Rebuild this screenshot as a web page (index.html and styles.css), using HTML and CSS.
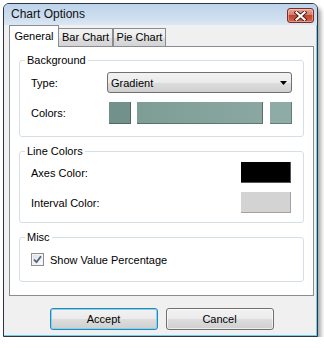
FILE: index.html
```html
<!DOCTYPE html>
<html>
<head>
<meta charset="utf-8">
<link rel="stylesheet" href="styles.css">
</head>
<body>
<div class="window">
  <div class="titlebar">
    <span class="title">Chart Options</span>
    <div class="close">
      <svg width="13" height="10" viewBox="0 0 13 10">
        <path d="M2.5 1.5 L10.5 8.5 M10.5 1.5 L2.5 8.5" stroke="#4a1a14" stroke-width="4" stroke-linecap="square" fill="none"/>
        <path d="M2.5 1.5 L10.5 8.5 M10.5 1.5 L2.5 8.5" stroke="#ffffff" stroke-width="2.2" stroke-linecap="square" fill="none"/>
      </svg>
    </div>
  </div>
  <div class="client">
    <div class="tabs">
      <div class="tab active">General</div>
      <div class="tab bar">Bar Chart</div>
      <div class="tab pie">Pie Chart</div>
    </div>
    <div class="panel">
      <fieldset class="group group-bg">
        <legend>Background</legend>
        <div class="form-bg">
          <span class="label">Type:</span>
          <div class="select">
            <span>Gradient</span>
            <svg width="7" height="4" viewBox="0 0 7 4"><path d="M0 0 H7 L3.5 4 Z" fill="#000"/></svg>
          </div>
          <span class="label">Colors:</span>
          <div class="swatches">
            <span class="sw sw-start"></span>
            <span class="sw sw-grad"></span>
            <span class="sw sw-end"></span>
          </div>
        </div>
      </fieldset>
      <fieldset class="group group-lines">
        <legend>Line Colors</legend>
        <div class="form-lines">
          <span class="label">Axes Color:</span>
          <span class="sw sw-axes"></span>
          <span class="label">Interval Color:</span>
          <span class="sw sw-interval"></span>
        </div>
      </fieldset>
      <fieldset class="group group-misc">
        <legend>Misc</legend>
        <div class="check-row">
          <span class="checkbox">
            <svg width="9" height="9" viewBox="0 0 9 9"><path d="M1 4.5 L3.5 7.2 L8 1.2" stroke="#4d6185" stroke-width="1.8" fill="none"/></svg>
          </span>
          <span>Show Value Percentage</span>
        </div>
      </fieldset>
    </div>
    <div class="buttons">
      <div class="btn default">Accept</div>
      <div class="btn">Cancel</div>
    </div>
  </div>
</div>
</body>
</html>
```
FILE: styles.css
```css
html, body {
  margin: 0;
  padding: 0;
  background: #ffffff;
}
body {
  font-family: "Liberation Sans", Arial, sans-serif;
  font-size: 11px;
  color: #000;
}
.window {
  margin: 3px 0 0 3px;
  width: 315px;
  box-sizing: border-box;
  border: 1px solid #2c3540;
  border-radius: 6px 6px 0 0;
  background: #f0f0f0;
  box-shadow: inset -1px -1px 0 #6ccdf0, 3px 4px 4px rgba(0,0,0,0.35);
  padding-bottom: 6px;
  display: flex;
  flex-direction: column;
}
.titlebar {
  height: 21px;
  display: flex;
  justify-content: space-between;
  align-items: flex-start;
  background: linear-gradient(#bdd3ea, #cfdff0 70%, #dbe7f3);
  border-radius: 5px 5px 0 0;
}
.title {
  font-size: 12px;
  line-height: 21px;
  padding-left: 7px;
  color: #111;
}
.close {
  margin-top: 4px;
  margin-right: 3px;
  width: 27px;
  height: 15px;
  box-sizing: border-box;
  border: 1px solid #7a2d22;
  border-radius: 3px;
  background: linear-gradient(#e9a99b, #d37d6b 45%, #c2432d 50%, #d06650 100%);
  box-shadow: inset 0 0 0 1px rgba(255,220,210,0.45);
  display: flex;
  align-items: center;
  justify-content: center;
}
.close svg { display: block; }
.client {
  padding: 0 3px 0 5px;
  display: flex;
  flex-direction: column;
}
.tabs {
  height: 21px;
  display: flex;
  align-items: flex-end;
}
.tab {
  box-sizing: border-box;
  border: 1px solid #898c95;
  border-bottom: none;
  text-align: center;
  height: 18px;
  line-height: 17px;
  background: linear-gradient(#f3f3f3, #ebebeb 50%, #dedede 51%, #d4d4d4);
}
.tab.active {
  position: relative;
  z-index: 1;
  width: 50px;
  height: 22px;
  line-height: 20px;
  margin-bottom: -1px;
  background: #ffffff;
}
.tab.bar {
  width: 55px;
  margin-left: -1px;
}
.tab.pie {
  width: 53px;
}
.panel {
  background: #ffffff;
  border: 1px solid #898c95;
  padding: 6px 9px 13px 9px;
}
.group {
  margin: 0;
  min-width: 0;
  border: 1px solid #d5dfe5;
  border-radius: 3px;
}
.group legend {
  padding: 0 2px;
  margin-left: -6px;
  line-height: 14px;
  font-size: 11px;
}
.group-bg {
  padding: 5px 11px 12px 11px;
}
.group-lines {
  margin-top: 7px;
  padding: 4px 11px 9px 11px;
}
.group-misc {
  margin-top: 7px;
  padding: 7px 11px 13px 11px;
}
.form-bg {
  display: grid;
  grid-template-columns: 76px 185px;
  grid-template-rows: 21px 22px;
  row-gap: 9px;
  align-items: center;
}
.select {
  height: 21px;
  box-sizing: border-box;
  border: 1px solid #707070;
  border-radius: 3px;
  background: linear-gradient(#f2f2f2, #ebebeb 50%, #dddddd 51%, #cfcfcf);
  display: flex;
  align-items: center;
  justify-content: space-between;
  padding: 0 4px 0 3px;
}
.select svg { display: block; }
.swatches {
  height: 22px;
  margin-left: 2px;
  display: flex;
}
.sw {
  display: block;
  box-sizing: border-box;
  border-right: 1px solid rgba(0,0,0,0.28);
  border-bottom: 1px solid rgba(0,0,0,0.28);
}
.sw-start {
  width: 22px;
  background: #71918a;
}
.sw-grad {
  width: 126px;
  margin-left: 6px;
  background: linear-gradient(to right, #7d9d95, #8aa8a1);
}
.sw-end {
  width: 22px;
  margin-left: 7px;
  background: #8eaca5;
}
.form-lines {
  display: grid;
  grid-template-columns: 1fr 51px;
  grid-template-rows: 21px 21px;
  row-gap: 9px;
  align-items: center;
}
.form-lines .sw {
  height: 21px;
  margin-right: 1px;
}
.sw-axes {
  background: #000000;
  border-right-color: #555;
  border-bottom-color: #555;
}
.sw-interval {
  background: #d3d3d3;
  border-right-color: #a2a2a2;
  border-bottom-color: #a2a2a2;
}
.check-row {
  height: 17px;
  display: flex;
  align-items: center;
  gap: 6px;
}
.checkbox {
  width: 13px;
  height: 13px;
  box-sizing: border-box;
  border: 1px solid #8e8f8f;
  background: linear-gradient(135deg, #dcdcdc, #ffffff);
  box-shadow: inset 0 0 0 1px #f4f4f4;
  display: flex;
  align-items: center;
  justify-content: center;
}
.checkbox svg { display: block; }
.buttons {
  margin-top: 12px;
  display: flex;
  justify-content: center;
  gap: 8px;
}
.btn {
  width: 108px;
  height: 22px;
  box-sizing: border-box;
  border: 1px solid #707070;
  border-radius: 3px;
  background: linear-gradient(#f2f2f2, #ebebeb 50%, #dddddd 51%, #cfcfcf);
  box-shadow: inset 0 0 0 1px rgba(255,255,255,0.6);
  text-align: center;
  line-height: 20px;
}
.btn.default {
  border-color: #3c7fb1;
  box-shadow: inset 0 0 0 1px #6fdcf8;
}
```
